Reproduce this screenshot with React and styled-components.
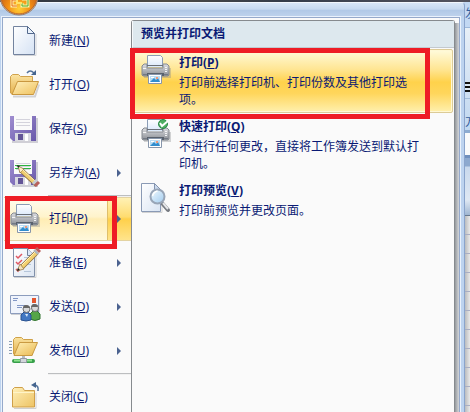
import React from "react";
import styled, { createGlobalStyle, css } from "styled-components";

const GlobalStyle = createGlobalStyle`
  * { box-sizing: border-box; }
  body {
    margin: 0;
    overflow: hidden;
    font: 12px/18px "Noto Sans", "Noto Sans CJK SC", sans-serif;
    color: #0a1a74;
  }
`;

const Screen = styled.div`
  position: relative;
  display: flex;
  flex-direction: column;
  height: 100vh;
  overflow: hidden;
  background: #3c434d;
`;

const TitleStrip = styled.div`
  flex: none;
  height: 2px;
  background: linear-gradient(90deg, #2b3442, #4c4a45 35%, #343c4a 60%, #555560);
`;

const Workspace = styled.div`
  display: flex;
  flex: 1;
  min-height: 0;
  background: #c6d8ee;
`;

const MenuWindow = styled.main`
  display: flex;
  flex: 1;
  flex-direction: column;
  min-width: 0;
  padding: 0 4px 0 2px;
  background: #bdd3ef;
  border-top: 1px solid #f2f7fd;
  border-right: 1px solid #8aa4cc;
  border-top-right-radius: 4px;
`;

const MenuCap = styled.div`
  flex: none;
  height: 14px;
  margin: 0 -4px 0 -2px;
  background: linear-gradient(#d8e6f7, #c6d9f0 45%, #b1c9e7 50%, #bfd3ed);
  border-top-right-radius: 4px;
`;

const MenuBody = styled.div`
  display: flex;
  flex: 1;
  min-height: 0;
  overflow: hidden;
  background: #fafafa;
  border: 1px solid #95a9cb;
  border-bottom: 0;
  outline: 1px solid #eaf2fc;
`;

const Commands = styled.nav`
  flex: none;
  width: 128px;
  padding: 1px 0 0 1px;
`;

const Divider = styled.hr`
  height: 2px;
  margin: 0 0 0 44px;
  border: 0;
  border-top: 1px solid #bcbec0;
  background: #f1f1f1;
`;

const RowWrap = styled.div`
  position: relative;
`;

const Command = styled.button`
  display: flex;
  align-items: center;
  width: 100%;
  height: 44px;
  padding: 0 0 0 5px;
  border: 0;
  background: transparent;
  color: inherit;
  font: inherit;
  text-align: left;
  ${(p) =>
    p.$active &&
    css`
      background: linear-gradient(#fffdf0, #fff3cb 45%, #ffedb4 50%, #fff8dc);
      border-top: 1px solid #e3d3a2;
      border-bottom: 1px solid #e3d3a2;
    `}
`;

const CommandLabel = styled.span`
  flex: 1;
  padding-left: 8px;
  white-space: nowrap;
`;

const ArrowCell = styled.span`
  display: flex;
  align-items: center;
  justify-content: center;
  width: 24px;
  height: 100%;
  ${(p) =>
    p.$active &&
    css`
      background: linear-gradient(#fff1b5, #ffdc70 45%, #ffd04a 50%, #ffe48c);
      border-left: 1px solid #dfbf6a;
    `}
`;

const Submenu = styled.section`
  flex: 1;
  min-width: 0;
  margin-top: 2px;
  background: #fafafa;
  border: 1px solid #868a8e;
  border-width: 1px 1px 0 1px;
  border-radius: 3px 3px 0 0;
`;

const SubmenuTitle = styled.h1`
  height: 27px;
  margin: 0;
  padding: 4px 8px;
  background: #dde8ee;
  border-bottom: 1px solid #c3c9cf;
  border-left: 1px solid #f6f9fb;
  font-size: 12px;
  line-height: 18px;
`;

const Choices = styled.div`
  padding: 1px;
`;

const Choice = styled.button`
  display: flex;
  align-items: flex-start;
  width: 100%;
  height: 64px;
  padding: 4px 13px 0 6px;
  border: 1px solid transparent;
  border-radius: 2px;
  background: transparent;
  color: inherit;
  font: inherit;
  text-align: left;
  ${(p) =>
    p.$active &&
    css`
      background: linear-gradient(#fffbdc, #ffe591 32%, #ffd24b 52%, #ffd65c 70%, #fff0ae);
      border-color: #dccb96;
      box-shadow: inset 0 0 0 1px #fff8d4;
    `}
`;

const ChoiceText = styled.span`
  flex: 1;
  min-width: 0;
  padding-left: 7px;
`;

const ChoiceName = styled.strong`
  display: block;
  margin-bottom: 2px;
`;

const ChoiceNote = styled.span`
  display: block;
  max-width: 246px;
  line-height: 17px;
`;

const ShadowEdge = styled.div`
  flex: none;
  width: 4px;
  margin-top: 5px;
  background: linear-gradient(90deg, #95999d, #b5b8bb 50%, #d3d6da);
`;

const RedFrame = styled.span`
  position: absolute;
  border: 5px solid #ee1c25;
  pointer-events: none;
`;

const CommandFrame = styled(RedFrame)`
  inset: -1px 14px -8px 1px;
`;

const ChoiceFrame = styled(RedFrame)`
  inset: -1px 23px -6px -3px;
`;

const SheetEdge = styled.aside`
  display: flex;
  flex: none;
  flex-direction: column;
  width: 5px;
  overflow: hidden;
  background: #d4e2f2;
`;

const TabPeek = styled.div`
  height: 26px;
  overflow: hidden;
  padding-top: 3px;
  background: #c2d8f3;
  border-bottom: 1px solid #9db8da;
  color: #35609f;
  white-space: nowrap;
`;

const RibbonPeek = styled.div`
  height: 105px;
  padding-top: 54px;
  overflow: hidden;
  background: linear-gradient(#e7eff7, #ccdef2 70%, #c1d8f0);
  border-bottom: 3px solid #8eacd1;
  color: #35609f;
  white-space: nowrap;
`;

const AlignBars = styled.div`
  height: 10px;
  margin-bottom: 6px;
  background: repeating-linear-gradient(#111 0 2px, #dce8f4 2px 4px);
`;

const GroupName = styled.div`
  height: 36px;
  padding-top: 14px;
  border-top: 1px solid #a3bddb;
`;

const FormulaPeek = styled.div`
  height: 22px;
  background: #f9fafb;
`;

const ColumnPeek = styled.div`
  height: 61px;
  background: linear-gradient(#8da9cf 0 8px, #c9d9ed 9px, #dfe8f3 42px, #9fb6d2);
  border-top: 3px solid #6f8fbd;
  border-bottom: 1px solid #66788f;
`;

const GridPeek = styled.div`
  flex: 1;
  background:
    repeating-linear-gradient(transparent 0 18px, #a9aec3 18px 19px),
    linear-gradient(90deg, #bbbcbe, #e9e9e9);
`;

const Orb = styled.div`
  position: absolute;
  top: 0;
  left: 0;
  line-height: 0;
`;

const IconSvg = styled.svg`
  flex: none;
  width: 32px;
  height: 32px;
`;

function Icon({ children }) {
  return (
    <IconSvg viewBox="0 0 32 32" aria-hidden="true">
      {children}
    </IconSvg>
  );
}

function Grad({ id, from, to, diagonal }) {
  return (
    <linearGradient id={id} x1="0" y1="0" x2={diagonal ? "1" : "0"} y2="1">
      <stop stopColor={from} />
      <stop offset="1" stopColor={to} />
    </linearGradient>
  );
}

function PageIcon() {
  return (
    <Icon>
      <defs><Grad id="page" from="#ffffff" to="#d5e2f4" diagonal /></defs>
      <path d="M5 30.500h22V9" fill="none" stroke="#d2d4d8" />
      <path d="M4.500 1.500h14l7 7v21h-21z" fill="url(#page)" stroke="#73839f" />
      <path d="M18.500 1.500v7h7z" fill="#e9f1fb" stroke="#53698c" />
    </Icon>
  );
}

function OpenIcon() {
  return (
    <Icon>
      <defs>
        <Grad id="openBack" from="#fbe4a3" to="#e5b14d" />
        <Grad id="openFront" from="#fff0bd" to="#efc15d" diagonal />
      </defs>
      <path d="M4 27.500h22l4-12" fill="none" stroke="#d2d2d4" strokeWidth="2" />
      <path d="M1.500 24V7.500l2-2h6l2 2h12V25H3z" fill="url(#openBack)" stroke="#d0a24d" />
      <path d="M3 25.500 8.500 12.500h21l-5 13z" fill="url(#openFront)" stroke="#c9973f" />
      <path d="M18 4q3-4 7 0" fill="none" stroke="#53739c" strokeWidth="1.500" />
      <path d="M27 1v5h-5z" fill="#45658f" />
    </Icon>
  );
}

function Disk({ id, green }) {
  return (
    <>
      <defs><Grad id={id} from="#a08ed0" to="#6858aa" diagonal /></defs>
      <path d="M3 29h25V5" fill="none" stroke="#d0cfd6" strokeWidth="2" />
      <path d="M1 3h26v25H4l-3-3z" fill={`url(#${id})`} />
      <path d="M5 3h18v14H5z" fill="#fafafa" />
      <path d="M7 6.500h14M7 9.500h14M7 12.500h14" stroke="#d4d3dc" />
      {green && <path d="M6 8.500h16M6 11.500h16" stroke="#2db33f" />}
      <path d="M6 20h16v8H6z" fill="#d9d9e1" />
      <path d="M9 21h5v6H9z" fill="#635597" />
      <path d="M16 21h3v7h-3z" fill="#fff" />
    </>
  );
}

function SaveIcon() {
  return <Icon><Disk id="diskSave" /></Icon>;
}

function SaveAsIcon() {
  return (
    <Icon>
      <Disk id="diskSaveAs" green />
      <path d="m12 13 16 15" stroke="#8b6a3c" strokeWidth="5" />
      <path d="m9 9 2 7 4-4z" fill="#fff0c6" stroke="#8b6a3c" strokeWidth=".7" />
      <path d="m13 14 13 12" stroke="#f0cd70" strokeWidth="3.500" />
      <path d="m14 13 12 11" stroke="#fff3c2" />
      <path d="m24 27 4-4" stroke="#c5cad0" strokeWidth="3" />
      <path d="m26 29 4-4" stroke="#b9605c" strokeWidth="3" />
      <path d="m8 8 3 1-2 2z" fill="#252525" />
    </Icon>
  );
}

function PrinterArt({ id }) {
  return (
    <>
      <defs>
        <Grad id={id} from="#dcdde0" to="#8a8e95" />
        <Grad id={`${id}Paper`} from="#ffffff" to="#dae8fa" />
      </defs>
      <path d="M4 23h26v-9" fill="none" stroke="#85878a" strokeOpacity=".35" strokeWidth="2" />
      <path d="M7.500 13V1.500h13l2 2V13" fill={`url(#${id}Paper)`} stroke="#8b9db6" />
      <path d="M4 10h3v4h16v-4h4l2 2v9l-1 1H3l-1-1v-9z" fill={`url(#${id})`} stroke="#858a91" />
      <path d="M7 11.500h16" stroke="#6a7079" />
      <path d="M3 14.500h3M25 13.500h2M25 15.500h2M25 17.500h2" stroke="#f4f5f6" />
      <path d="M3 20.500h25" stroke="#737984" />
      <path d="M7 19h17v3H7z" fill="#59616d" />
      <path d="M8.500 20.500h13v9h-13z" fill="#fff" stroke="#8796ab" />
      <path d="M10 22h10v6H10z" fill="#b9dcf4" />
      <path d="m10 28 4-4 2 2 2-2 2 4z" fill="#318dce" />
      <path d="M16 23h2v2h-2z" fill="#ef9878" />
      <path d="M11 23h3v1h-3z" fill="#fff" />
    </>
  );
}

function PrinterIcon({ id }) {
  return <Icon><PrinterArt id={id} /></Icon>;
}

function QuickPrintIcon() {
  return (
    <Icon>
      <PrinterArt id="quickPrinter" />
      <circle cx="23" cy="6" r="4.500" fill="#4fae62" stroke="#2b8a48" />
      <path d="m20 5 2 3 6-5" fill="none" stroke="#fff" strokeWidth="2" />
    </Icon>
  );
}

function PreviewIcon() {
  return (
    <Icon>
      <defs>
        <Grad id="previewPage" from="#fff" to="#d9e4f3" diagonal />
        <Grad id="lens" from="#f3fbff" to="#9fcaee" diagonal />
      </defs>
      <path d="M2 30.500h20V10" fill="none" stroke="#d2d2d2" />
      <path d="M1.500 1.500h13l6 6v22h-19z" fill="url(#previewPage)" stroke="#8a9ab5" />
      <path d="M14.500 1.500v6h6z" fill="#cad9ed" stroke="#8293ae" />
      <path d="m22 21 6 7" stroke="#777b82" strokeWidth="4" strokeLinecap="round" />
      <path d="m23 21 5 6" stroke="#e5e6e8" strokeWidth="2" />
      <circle cx="17.500" cy="14.500" r="7" fill="url(#lens)" stroke="#98a5b7" strokeWidth="2" />
      <path d="M12.500 14q1-4 5-5" fill="none" stroke="#fff" strokeWidth="1.500" />
    </Icon>
  );
}

function PrepareIcon() {
  return (
    <Icon>
      <defs><Grad id="prepare" from="#fff" to="#dce5f2" diagonal /></defs>
      <path d="M5 30.500h22V9" fill="none" stroke="#d2d2d2" />
      <path d="M4.500 1.500h14l7 7v21h-21z" fill="url(#prepare)" stroke="#8190aa" />
      <path d="M18.500 1.500v7h7" fill="#dce7f7" stroke="#70819c" />
      <path d="m7 9 2 2 4-4M7 15l2 2 4-4M7 22l2 2 3-4" fill="none" stroke="#df5762" strokeWidth="1.500" />
      <path d="M15 10.500h6M14 17.500h8M15 24.500h7" stroke="#b5c5da" />
      <path d="m13 20 15-15" stroke="#8b6a3c" strokeWidth="5" />
      <path d="m13 20 14-14" stroke="#f3d070" strokeWidth="3.500" />
      <path d="m13 18 13-13" stroke="#fff3b9" />
      <path d="m11 17-3 7 7-2z" fill="#f5e3bb" stroke="#8b6a3c" strokeWidth=".7" />
      <path d="m8 24 1-3 2 2z" fill="#222" />
      <path d="m27 1 4 4" stroke="#b9605c" strokeWidth="3" />
      <path d="m25 3 4 4" stroke="#aeb8c2" strokeWidth="2" />
    </Icon>
  );
}

function SendIcon() {
  return (
    <Icon>
      <path d="M2 23.500h28V5" fill="none" stroke="#ced0d4" />
      <path d="M1.500 4.500h28v18h-28z" fill="#f0f4fc" stroke="#8c9cbd" />
      <path d="M4 7.500h5M4 9.500h4M8 14.500h8M8 16.500h5" stroke="#8196c5" />
      <path d="M23 7h4v5h-4z" fill="#e4552e" />
      <path d="M21 28v-5l3-3h4l3 3v5q-5 3-10 0" fill="#55a548" stroke="#31722f" />
      <circle cx="26" cy="17" r="3.500" fill="#d8d9db" stroke="#6b6b6d" />
      <path d="M22 16q1-5 6-2l1 2" fill="#666" />
      <path d="M12 29v-5l3-3h4l3 3v5q-5 2-10 0" fill="#4277c2" stroke="#2b528f" />
      <circle cx="17.500" cy="18" r="3.500" fill="#d8d9db" stroke="#6b6b6d" />
      <path d="M14 17q1-5 6-2l1 2" fill="#666" />
      <path d="m16 23 2 3 1-3z" fill="#d8e9fa" />
    </Icon>
  );
}

function PublishIcon() {
  return (
    <Icon>
      <defs>
        <Grad id="publishBack" from="#fae3a0" to="#e2ad48" />
        <Grad id="publishFront" from="#fff0b7" to="#e9b850" diagonal />
      </defs>
      <path d="M0 6.500h3M0 9.500h3M0 12.500h3M0 15.500h3M0 18.500h3" stroke="#8b9eb4" />
      <path d="M4.500 19V4.500l2-2h6l2 2h9V20H6z" fill="url(#publishBack)" stroke="#cfa148" />
      <path d="M5 20.500 10.500 7.500h18L23 20.500z" fill="url(#publishFront)" stroke="#c99a42" />
      <path d="M13 21h3v4h-3z" fill="#b5bac1" />
      <path d="M5 26h19" stroke="#379f4a" strokeWidth="4" strokeLinecap="round" />
      <path d="M5 25.500h18" stroke="#8ee28e" strokeWidth="2" />
      <path d="M11.500 23.500h6v4h-6z" fill="#d3d7dc" stroke="#949ba3" />
    </Icon>
  );
}

function CloseIcon() {
  return (
    <Icon>
      <defs><Grad id="closeFolder" from="#fff0b9" to="#edc364" diagonal /></defs>
      <path d="M5 27.500h22V12" fill="none" stroke="#d0d0d0" />
      <path d="M3.500 26V8.500l2-2h8l2 3h10V26z" fill="url(#closeFolder)" stroke="#cf9f49" />
      <path d="M4 11.500h21" stroke="#fff4c8" />
      <path d="M25 4q5 0 4 6" fill="none" stroke="#53739c" strokeWidth="1.500" />
      <path d="m22 4 5-3v6z" fill="#45658f" />
    </Icon>
  );
}

function OfficeOrb() {
  return (
    <Orb>
      <svg width="40" height="16" viewBox="0 0 40 16" role="img" aria-label="Office">
        <defs>
          <radialGradient id="orbFill" cx=".5" cy=".85" r=".65">
            <stop stopColor="#ffcf37" />
            <stop offset=".5" stopColor="#f28c13" />
            <stop offset="1" stopColor="#bf5b19" />
          </radialGradient>
        </defs>
        <circle cx="19" cy="-4" r="19" fill="#e9cfae" stroke="#927967" />
        <circle cx="19" cy="-4" r="18" fill="url(#orbFill)" stroke="#b86429" />
        <path d="M17 0h-5v6h5" fill="none" stroke="#fff0b0" strokeWidth="3" />
        <path d="M17 0h-5v6h5" fill="none" stroke="#e46a19" />
        <path d="M22-1h6v7h-6V3" fill="none" stroke="#effab0" strokeWidth="3" />
        <path d="M22-1h6v7h-6V3" fill="none" stroke="#58a52f" />
        <path d="M17-1v4h5" fill="none" stroke="#ffe368" strokeWidth="2" />
      </svg>
    </Orb>
  );
}

function Arrow() {
  return (
    <svg width="5" height="8" viewBox="0 0 5 8" aria-hidden="true">
      <path d="M0 0v8l4-4z" fill="#4b628f" />
    </svg>
  );
}

function CommandRow({ icon, name, hotkey, arrow, active }) {
  return (
    <RowWrap>
      <Command type="button" $active={active} aria-haspopup={arrow ? "menu" : undefined}>
        {icon}
        <CommandLabel>{name}(<u>{hotkey}</u>)</CommandLabel>
        {arrow && <ArrowCell $active={active}><Arrow /></ArrowCell>}
      </Command>
      {active && <CommandFrame />}
    </RowWrap>
  );
}

function ChoiceRow({ icon, name, hotkey, note, active }) {
  return (
    <RowWrap>
      <Choice type="button" $active={active}>
        {icon}
        <ChoiceText>
          <ChoiceName>{name}(<u>{hotkey}</u>)</ChoiceName>
          <ChoiceNote>{note}</ChoiceNote>
        </ChoiceText>
      </Choice>
      {active && <ChoiceFrame />}
    </RowWrap>
  );
}

export default function App() {
  return (
    <Screen>
      <GlobalStyle />
      <TitleStrip />
      <Workspace>
        <MenuWindow>
          <MenuCap />
          <MenuBody>
            <Commands>
              <CommandRow icon={<PageIcon />} name="新建" hotkey="N" />
              <CommandRow icon={<OpenIcon />} name="打开" hotkey="O" />
              <CommandRow icon={<SaveIcon />} name="保存" hotkey="S" />
              <CommandRow icon={<SaveAsIcon />} name="另存为" hotkey="A" arrow />
              <Divider />
              <CommandRow icon={<PrinterIcon id="menuPrinter" />} name="打印" hotkey="P" arrow active />
              <CommandRow icon={<PrepareIcon />} name="准备" hotkey="E" arrow />
              <CommandRow icon={<SendIcon />} name="发送" hotkey="D" arrow />
              <CommandRow icon={<PublishIcon />} name="发布" hotkey="U" arrow />
              <Divider />
              <CommandRow icon={<CloseIcon />} name="关闭" hotkey="C" />
            </Commands>
            <Submenu>
              <SubmenuTitle>预览并打印文档</SubmenuTitle>
              <Choices>
                <ChoiceRow icon={<PrinterIcon id="choicePrinter" />} name="打印" hotkey="P" note="打印前选择打印机、打印份数及其他打印选项。" active />
                <ChoiceRow icon={<QuickPrintIcon />} name="快速打印" hotkey="Q" note="不进行任何更改，直接将工作簿发送到默认打印机。" />
                <ChoiceRow icon={<PreviewIcon />} name="打印预览" hotkey="V" note="打印前预览并更改页面。" />
              </Choices>
            </Submenu>
            <ShadowEdge />
          </MenuBody>
        </MenuWindow>
        <SheetEdge>
          <TabPeek>发</TabPeek>
          <RibbonPeek>
            <AlignBars />
            <GroupName>方</GroupName>
          </RibbonPeek>
          <FormulaPeek />
          <ColumnPeek />
          <GridPeek />
        </SheetEdge>
      </Workspace>
      <OfficeOrb />
    </Screen>
  );
}
